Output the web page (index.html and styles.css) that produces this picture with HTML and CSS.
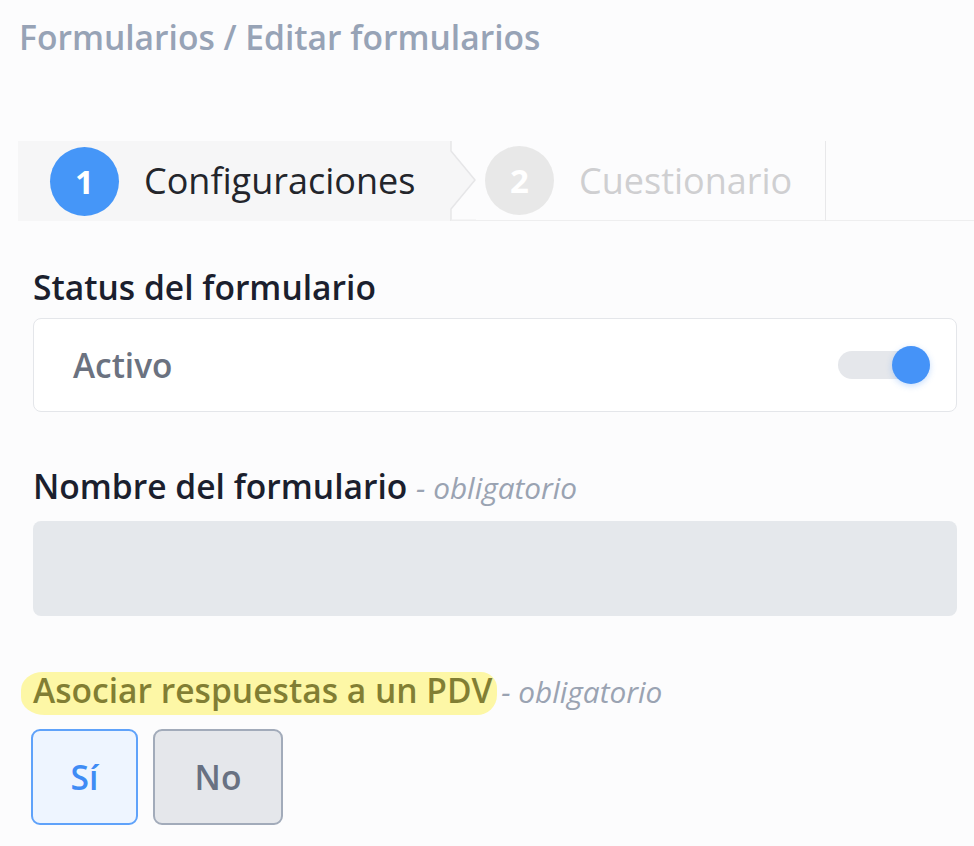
FILE: index.html
```html
<!DOCTYPE html>
<html lang="es">
<head>
<meta charset="utf-8">
<title>Editar formularios</title>
<link rel="stylesheet" href="styles.css">
</head>
<body>
<div class="page">
  <h1 class="crumb">Formularios / Editar formularios</h1>

  <div class="steps">
    <div class="step step-active">
      <span class="num num-active">1</span>
      <span class="step-label">Configuraciones</span>
    </div>
    <svg class="chev" width="26" height="80" viewBox="0 0 26 80">
      <path d="M1 0 V10 L25 39 L1 68 V80 H26 V0 Z" fill="#fcfcfd"/>
      <path d="M1 0 V10 L25 39 L1 68 V80" fill="none" stroke="#e6e6e8" stroke-width="1.5"/>
      <path d="M1 79.25 H26" fill="none" stroke="#eeeeef" stroke-width="1.5"/>
    </svg>
    <div class="step step-next">
      <span class="num num-next">2</span>
      <span class="step-label step-label-next">Cuestionario</span>
    </div>
    <div class="steps-rest"></div>
  </div>

  <div class="form">
    <div class="field">
      <div class="label">Status del formulario</div>
      <div class="card">
        <span class="card-text">Activo</span>
        <span class="toggle"><span class="knob"></span></span>
      </div>
    </div>

    <div class="field field-name">
      <div class="label">Nombre del formulario <span class="req">- obligatorio</span></div>
      <div class="input"></div>
    </div>

    <div class="field">
      <div class="label"><span class="mark">Asociar respuestas a un PDV</span> <span class="req">- obligatorio</span></div>
      <div class="choices">
        <button class="choice choice-on" type="button">Sí</button>
        <button class="choice choice-off" type="button">No</button>
      </div>
    </div>
  </div>
</div>
</body>
</html>
```

FILE: styles.css
```css
* { box-sizing: border-box; }

html, body {
  margin: 0;
  background: #fcfcfd;
  font-family: "Open Sans", "Noto Sans", sans-serif;
}

.page {
  width: 974px;
  height: 846px;
  overflow: hidden;
}

.crumb {
  margin: 0;
  padding: 15px 0 0 19px;
  height: 141px;
  font-size: 33.6px;
  line-height: 44px;
  font-weight: 600;
  color: #97a3b6;
  white-space: nowrap;
}

.steps {
  display: flex;
  margin-left: 18px;
  height: 80px;
}

.step {
  display: flex;
  align-items: center;
  height: 80px;
}

.step-active {
  width: 432px;
  padding-left: 32px;
  background: #f6f6f7;
}

.step-next {
  width: 350px;
  padding-left: 9px;
  border-right: 1.5px solid #e8e8ea;
  border-bottom: 1.5px solid #eeeeef;
}

.chev {
  display: block;
  flex: none;
  background: #f6f6f7;
}

.steps-rest {
  flex: 1;
  border-bottom: 1.5px solid #eeeeef;
}

.num {
  width: 69px;
  height: 69px;
  border-radius: 50%;
  display: flex;
  align-items: center;
  justify-content: center;
  flex: none;
  color: #fff;
  font-size: 33px;
  font-weight: 700;
  margin-right: 25px;
}

.num-active { background: #4596f8; }
.num-next { background: #e8e8e8; }

.step-label {
  font-size: 36px;
  color: #23252b;
  line-height: 1;
  white-space: nowrap;
}

.step-label-next { color: #cfcfd1; }

.form {
  padding: 45px 17px 0 33px;
}

.field { margin-bottom: 53px; }

.label {
  font-size: 33.6px;
  line-height: 42px;
  font-weight: 600;
  color: #1b1f2e;
  margin-bottom: 10px;
  white-space: nowrap;
}

.field-name .label { margin-bottom: 12px; }

.req {
  font-size: 29.8px;
  font-style: italic;
  font-weight: 400;
  color: #9aa3b2;
}

.mark {
  position: relative;
}

.mark::after {
  content: "";
  position: absolute;
  left: -12px;
  right: -5px;
  top: 5px;
  bottom: -2px;
  background: rgba(255, 241, 60, 0.45);
  border-radius: 22px 16px 20px 24px / 18px 16px 20px 18px;
  pointer-events: none;
}

.card {
  height: 94px;
  background: #fff;
  border: 1px solid #e4e6ea;
  border-radius: 8px;
  display: flex;
  align-items: center;
  justify-content: space-between;
  padding: 0 26px 0 39px;
}

.card-text {
  font-size: 33.4px;
  font-weight: 600;
  color: #6b7280;
}

.toggle {
  position: relative;
  width: 92px;
  height: 28px;
  border-radius: 14px;
  background: #e5e7eb;
}

.knob {
  position: absolute;
  right: 0;
  top: -5px;
  width: 38px;
  height: 38px;
  border-radius: 50%;
  background: #4593f8;
  box-shadow: 0 2px 6px rgba(69, 147, 248, 0.3);
}

.input {
  height: 95px;
  border-radius: 8px;
  background: #e5e8ec;
}

.choices {
  display: flex;
  gap: 15px;
  margin-top: 16px;
  margin-left: -2px;
}

.choice {
  height: 96px;
  border-radius: 9px;
  border: 2px solid;
  font-family: inherit;
  font-size: 33.6px;
  font-weight: 600;
  padding: 0;
}

.choice-on {
  width: 107px;
  background: #eef5ff;
  border-color: #5fa2fa;
  color: #3f8cf5;
}

.choice-off {
  width: 130px;
  background: #e5e7eb;
  border-color: #a2abba;
  color: #687182;
}
```
